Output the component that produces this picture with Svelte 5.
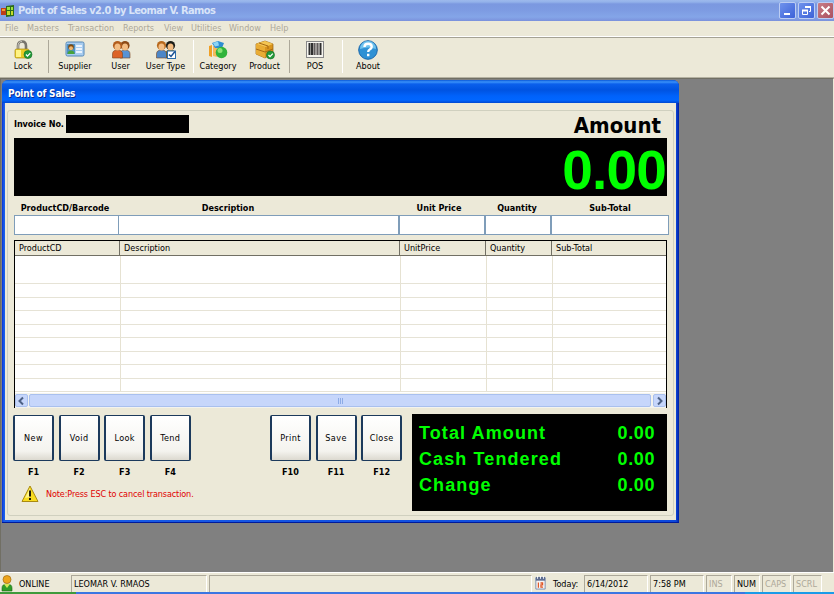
<script>
  const menus = [
    { label: "File", w: 22 },
    { label: "Masters", w: 41 },
    { label: "Transaction", w: 55 },
    { label: "Reports", w: 41 },
    { label: "View", w: 27 },
    { label: "Utilities", w: 38 },
    { label: "Window", w: 41 },
    { label: "Help", w: 27 },
  ];

  const tools = [
    { icon: "lock", label: "Lock", w: 46 },
    { icon: "supplier", label: "Supplier", w: 52, sep: "dark" },
    { icon: "user", label: "User", w: 39 },
    { icon: "usertype", label: "User Type", w: 51 },
    { icon: "category", label: "Category", w: 48, sep: "light" },
    { icon: "product", label: "Product", w: 45 },
    { icon: "pos", label: "POS", w: 50, sep: "dark" },
    { icon: "about", label: "About", w: 50, sep: "light" },
  ];

  const entries = ["ProductCD/Barcode", "Description", "Unit Price", "Quantity", "Sub-Total"];
  const columns = ["ProductCD", "Description", "UnitPrice", "Quantity", "Sub-Total"];
  const rows = Array.from({ length: 9 });

  const leftKeys = [
    { label: "New", key: "F1" },
    { label: "Void", key: "F2" },
    { label: "Look", key: "F3" },
    { label: "Tend", key: "F4" },
  ];
  const rightKeys = [
    { label: "Print", key: "F10" },
    { label: "Save", key: "F11" },
    { label: "Close", key: "F12" },
  ];

  const totals = [
    { label: "Total Amount", value: "0.00" },
    { label: "Cash Tendered", value: "0.00" },
    { label: "Change", value: "0.00" },
  ];
</script>

{#snippet check(x, y)}
  <circle cx={x} cy={y} r="4" fill="#239b3a" stroke="#136b24" stroke-width=".6" />
  <path d="M{x - 2} {y}l1.5 1.6 2.8 -3" fill="none" stroke="#fff" stroke-width="1.3" />
{/snippet}

{#snippet person(x, hair, shirt)}
  <path d="M{x - 5} 18v-4q0-4 5-4t5 4v4z" fill={shirt} stroke="#7b4520" stroke-width=".6" />
  <circle cx={x} cy="5.5" r="4.6" fill={hair} />
  <ellipse cx={x} cy="7" rx="3" ry="3.6" fill="#f3bd83" />
{/snippet}

<div class="app">
  <header class="titlebar">
    <svg class="logo" width="14" height="14" viewBox="0 0 14 14">
      <path d="M0 4h5v7H0z" fill="#bd3d17" />
      <path d="M1 5h3v2H1z" fill="#ec9d32" />
      <path d="M5 2l8-1v11l-8 1z" fill="#2c6b1c" />
      <path d="M6 3h3v3H6zM10 3h2v3h-2z" fill="#9be33c" />
      <path d="M6 7h3v4H6zM10 7h2v4h-2z" fill="#c5dc29" />
    </svg>
    <h1>Point of Sales v2.0 by Leomar V. Ramos</h1>
    <div class="winbtns">
      <button aria-label="Minimize"><svg width="16" height="16"><path d="M4 10h6v2H4z" fill="#fff" /></svg></button>
      <button aria-label="Restore">
        <svg width="16" height="16" fill="none" stroke="#fff"><path d="M6.5 5V3.5h5v5H10" /><path d="M6 4h6" stroke-width="2" /><path d="M3.5 7.5h5v4h-5z" /><path d="M3 7.5h6" stroke-width="2" /></svg>
      </button>
      <button class="x" aria-label="Close"><svg width="16" height="16"><path d="M3.500 3.500l8 8M11.500 3.500l-8 8" stroke="#fff" stroke-width="2" /></svg></button>
    </div>
  </header>

  <nav>
    {#each menus as m}
      <span style:width="{m.w}px">{m.label}</span>
    {/each}
  </nav>

  <div class="toolbar">
    {#each tools as t}
      {#if t.sep}<i class="sep {t.sep}"></i>{/if}
      <div class="tool" style:width="{t.w}px">
        <svg width="22" height="20" viewBox="0 0 22 20">
          {#if t.icon === "lock"}
            <path d="M6 10V6q0-4.500 4-4.500t4 4.500v4" fill="none" stroke="#77746c" stroke-width="2.600" />
            <path d="M6 10V6q0-4.500 4-4.500" fill="none" stroke="#c9c7bd" />
            <rect x="3" y="9" width="14" height="9" rx="1.500" fill="#e9cb23" stroke="#a98b18" stroke-width=".7" />
            <path d="M4 10h5v7H4z" fill="#fff384" />
            {@render check(16, 14.5)}
          {:else if t.icon === "supplier"}
            <rect x="2" y="2" width="18" height="14" rx="1.500" fill="#a9cdf0" stroke="#5588b8" />
            <rect x="3" y="4" width="8" height="10" fill="#4d91c4" />
            <circle cx="7" cy="7" r="2.800" fill="#7c4a12" />
            <circle cx="7" cy="8.200" r="2" fill="#f0b66d" />
            <path d="M3.500 14q0-3.500 3.500-3.500t3.500 3.500z" fill="#48a33b" />
            <path d="M12 6h6M12 9h6M12 12h6" stroke="#fff" stroke-width="1.600" />
          {:else if t.icon === "user"}
            {@render person(15, "#8c4a16", "#5792d5")}
            {@render person(7.5, "#b25d1d", "#dc6327")}
          {:else if t.icon === "usertype"}
            {@render person(15.5, "#1c1d18", "#50892f")}
            {@render person(6.5, "#b8691d", "#4c86c7")}
            <rect x="12.500" y="11" width="8" height="7.500" fill="#fff" stroke="#2b6ba9" />
            <path d="M14 14.500l2 2 4-5" fill="none" stroke="#174f93" stroke-width="1.500" />
          {:else if t.icon === "category"}
            <path d="M2 6l3-1v12l-3-1z" fill="#f0a025" />
            <path d="M6 6h4v11l-4-1z" fill="#f6b95c" />
            <path d="M5 3l6-2 6 2-2 5H8z" fill="#2f8ed2" />
            <path d="M6 3l5-1.500 1 4-4 1z" fill="#8dd5f5" />
            <circle cx="14.500" cy="12.500" r="5.800" fill="#31b33b" />
            <circle cx="13" cy="10.500" r="2.500" fill="#89e475" />
          {:else if t.icon === "product"}
            <path d="M2 4l9-3 8 3v9l-8 5-9-4z" fill="#d9941d" stroke="#9a6311" stroke-width=".7" />
            <path d="M2 4l9-3 8 3-8 3z" fill="#f4c552" />
            <path d="M11 7v11l-9-4V4z" fill="#e9ac34" />
            <path d="M5 3l9 3v3M2 9l9 3 8-3" fill="none" stroke="#a76914" />
            {@render check(16.5, 15)}
          {:else if t.icon === "pos"}
            <rect x="2.500" y="1.500" width="17" height="16" fill="#f6f5ef" stroke="#888" />
            <path d="M5.500 3v12M8 3v12M16.500 3v12" stroke="#303030" stroke-width="2" />
            <path d="M10.500 3v12M13.500 3v12" stroke="#605b5b" stroke-width="2.200" />
          {:else}
            <circle cx="11" cy="10" r="9.300" fill="#2f91d4" stroke="#1c69ad" />
            <path d="M3 9a8 8 0 0 1 16 0q-8-3-16 0z" fill="#70c3ee" />
            <path d="M7.500 7q0-3.200 3.600-3.200t3.600 2.900q0 1.800-2 2.800-1.500.8-1.500 2.500M11.200 13.700v2.500" fill="none" stroke="#fff" stroke-width="2.400" />
          {/if}
        </svg>
        <span>{t.label}</span>
      </div>
    {/each}
  </div>

  <main>
    <section class="window">
      <h2>Point of Sales</h2>
      <div class="client">
        <div class="group">
          <div class="top">
            <label for="invoice">Invoice No.</label>
            <output id="invoice" class="invoice"></output>
            <strong>Amount</strong>
          </div>
          <div class="display">0.00</div>

          <div class="cols entrylabels">
            {#each entries as e}<b>{e}</b>{/each}
          </div>
          <div class="cols entry">
            {#each entries as e}<input aria-label={e} />{/each}
          </div>

          <div class="grid">
            <div class="cols head">
              {#each columns as c}<span>{c}</span>{/each}
            </div>
            <div class="body">
              {#each rows as _}
                <div class="cols row">
                  {#each columns as _}<i></i>{/each}
                </div>
              {/each}
            </div>
            <div class="scroll">
              <button aria-label="Scroll left"><svg width="12" height="12"><path d="M7 2.500L3.500 6l3.500 3.500" /></svg></button>
              <div class="thumb"><i></i><i></i><i></i></div>
              <button aria-label="Scroll right"><svg width="12" height="12"><path d="M4 2.500L7.500 6 4 9.500" /></svg></button>
            </div>
          </div>

          <div class="bottom">
            <div class="actions">
              <div class="keys">
                {#each leftKeys as k}
                  <div class="key"><button>{k.label}</button><b>{k.key}</b></div>
                {/each}
                <span class="gap"></span>
                {#each rightKeys as k}
                  <div class="key"><button>{k.label}</button><b>{k.key}</b></div>
                {/each}
              </div>
              <p class="note">
                <svg width="18" height="18" viewBox="0 0 18 18">
                  <path d="M9 1L17 16.500H1z" fill="#f8dc20" stroke="#a98a10" stroke-linejoin="round" />
                  <path d="M9 3L4 13l5-1z" fill="#fff58b" />
                  <path d="M9 5.500v6M9 13v2" stroke="#221c08" stroke-width="2" />
                </svg>
                <span>Note:Press ESC to cancel transaction.</span>
              </p>
            </div>
            <div class="totals">
              {#each totals as t}
                <div><span>{t.label}</span><span class="num">{t.value}</span></div>
              {/each}
            </div>
          </div>
        </div>
      </div>
    </section>
  </main>

  <footer>
    <svg width="14" height="17" viewBox="0 0 14 17">
      <path d="M2 16v-3q0-4 5-4t5 4v3z" fill="#2e9d27" stroke="#1c6d18" stroke-width=".6" />
      <circle cx="7" cy="4.500" r="4" fill="#eda51c" stroke="#a36b0c" stroke-width=".7" />
      <path d="M4 9h6l-3 4z" fill="#d4e95b" />
    </svg>
    <span class="online">ONLINE</span>
    <span class="pane name">LEOMAR V. RMAOS</span>
    <span class="pane blank"></span>
    <svg class="cal" width="11" height="14" viewBox="0 0 13 15" preserveAspectRatio="none">
      <path d="M1 2h11v12H1z" fill="#f8f4f2" stroke="#7389ac" />
      <path d="M1 1h11v4H1z" fill="#5e6d91" />
      <path d="M3 0v3M6.500 0v3M10 0v3" stroke="#fff" />
      <path d="M4 7v5.500M6.500 7.500h2.500v2H7v2.500h2.500" fill="none" stroke="#df5525" stroke-width="1.400" />
    </svg>
    <span class="today">Today:</span>
    <span class="pane date">6/14/2012</span>
    <span class="pane time">7:58 PM</span>
    <span class="pane ins off">INS</span>
    <span class="pane numl">NUM</span>
    <span class="pane caps off">CAPS</span>
    <span class="pane scrl off">SCRL</span>
  </footer>
  <div class="taskbar"><i class="start"></i><i class="tray"></i></div>
</div>

<style>
  :global(body) {
    margin: 0;
    overflow: hidden;
  }
  .app {
    width: 834px;
    height: 594px;
    display: flex;
    flex-direction: column;
    background: #ece9d8;
    font: 9px "DejaVu Sans Condensed", "DejaVu Sans", sans-serif;
    color: #000;
    white-space: nowrap;
  }
  .app * {
    box-sizing: border-box;
  }
  button {
    padding: 0;
    font: inherit;
    color: inherit;
  }
  svg {
    display: block;
    flex: none;
  }

  .titlebar {
    height: 21px;
    flex: none;
    display: flex;
    align-items: center;
    padding-left: 1px;
    background: linear-gradient(#9db9ec 0, #93b2ea 2px, #7b98e0 4px, #7d9be2 10px, #84a5e8 17px, #7a91dc 21px);
  }
  h1 {
    flex: 1;
    margin: 0 0 0 3px;
    font-size: 11px;
    line-height: 20px;
    letter-spacing: -0.62px;
    color: #d9e4f8;
  }
  .winbtns {
    display: flex;
    gap: 2px;
  }
  .winbtns button {
    width: 17px;
    height: 17px;
    border: 1px solid #bccdf3;
    border-radius: 2px;
    background: linear-gradient(135deg, #6f92ec, #3c62d8);
  }
  .winbtns .x {
    background: linear-gradient(135deg, #c77d86, #ab5060);
  }

  nav {
    height: 16px;
    flex: none;
    display: flex;
    padding-left: 5px;
    line-height: 14px;
    color: #aca899;
    border-bottom: 1px solid #fff;
  }
  nav span {
    flex: none;
  }

  .toolbar {
    height: 41px;
    flex: none;
    display: flex;
    border-top: 1px solid #a5a294;
    border-bottom: 1px solid #b5b2a2;
    padding-top: 2px;
  }
  .tool {
    display: flex;
    flex-direction: column;
    align-items: center;
  }
  .tool span {
    line-height: 13px;
  }
  .sep {
    width: 1px;
    height: 33px;
    margin-left: 2px;
    background: #aca899;
  }
  .sep.light {
    background: #fff;
  }

  main {
    flex: 1;
    min-height: 0;
    background: #808080;
    border-top: 1px solid #716f64;
    border-left: 1px solid #716f64;
    border-right: 1px solid #ece9d8;
    padding: 1px 0 0 1px;
  }
  .window {
    width: 677px;
    height: 443px;
    display: flex;
    flex-direction: column;
    background: linear-gradient(90deg, #0831d9, #1a5ee8 2px, #0c48dc 674px, #001ea0);
    border-bottom: 1px solid #001a9a;
    border-radius: 6px 6px 0 0;
    padding: 0 3px 2px 3px;
  }
  h2 {
    height: 23px;
    flex: none;
    margin: 0 -3px;
    padding-left: 6px;
    font-size: 10px;
    line-height: 27px;
    letter-spacing: -0.2px;
    color: #fff;
    text-shadow: 1px 1px #0a2a90;
    border-radius: 6px 6px 0 0;
    background: linear-gradient(#0a58d8 0, #3a92fa 2px, #0b60ec 4px, #0053e1 10px, #0062fb 16px, #0066ff 20px, #0047d0 23px);
  }
  .client {
    flex: 1;
    background: #ece9d8;
    padding: 7px 2px 4px;
  }
  .group {
    height: 406px;
    border: 1px solid #d0d0bf;
    border-radius: 3px;
    padding: 4px 0 0 6px;
  }
  .top {
    display: flex;
    height: 23px;
    width: 653px;
  }
  .top label {
    width: 52px;
    font-weight: bold;
    line-height: 19px;
    letter-spacing: -0.1px;
  }
  .invoice {
    width: 123px;
    height: 18px;
    background: #000;
  }
  .top strong {
    margin-left: auto;
    margin-right: 6px;
    font-size: 22px;
    line-height: 22px;
  }
  .display {
    width: 653px;
    height: 58px;
    background: #000;
    color: #0f0;
    font: bold 55px/65px "Liberation Sans", sans-serif;
    letter-spacing: -0.8px;
    text-align: right;
    padding-right: 1px;
  }

  .cols {
    display: grid;
  }
  .entrylabels {
    grid-template-columns: 102px 280px 86px 70px 116px;
    width: 654px;
    height: 19px;
    line-height: 24px;
    text-align: center;
  }
  .entrylabels b:nth-child(2) {
    padding-right: 56px;
  }
  .entry {
    grid-template-columns: 105px 280px 86px 66px 118px;
    width: 655px;
    height: 20px;
  }
  .entry input {
    width: 100%;
    height: 20px;
    border: 1px solid #7f9db9;
    background: #fff;
    padding: 0;
  }
  .entry input:nth-child(2) {
    border-left: 0;
  }

  .grid {
    width: 653px;
    height: 168px;
    margin-top: 5px;
    border: 1px solid #000;
    border-bottom: 0;
    background: #fff;
  }
  .head {
    grid-template-columns: 104px 280px 86px 66px 115px;
    height: 15px;
    background: #ece9d8;
    border-bottom: 1px solid #716f64;
  }
  .head span {
    padding-left: 4px;
    line-height: 15px;
    border-left: 1px solid #716f64;
  }
  .head span:first-child {
    border-left: 0;
  }
  .body {
    height: 137px;
    overflow: hidden;
  }
  .row {
    grid-template-columns: 106px 280px 86px 66px 113px;
    height: 13.5px;
    border-bottom: 1px solid #e6e3d6;
  }
  .row:first-child {
    height: 28px;
  }
  .row i {
    border-right: 1px solid #e6e2d2;
  }
  .row i:last-child {
    border: 0;
  }
  .scroll {
    height: 15px;
    display: flex;
    background: #f3f3ee;
    padding-top: 1px;
  }
  .scroll button,
  .thumb {
    height: 13px;
    border: 1px solid #a9c0ee;
    border-radius: 2px;
    background: #c6d6fb;
  }
  .scroll button {
    width: 13px;
  }
  .scroll svg {
    fill: none;
    stroke: #4d6185;
    stroke-width: 2;
  }
  .thumb {
    width: 622px;
    margin: 0 2px 0 1px;
    display: flex;
    justify-content: center;
    align-items: center;
    gap: 1px;
  }
  .thumb i {
    width: 1px;
    height: 6px;
    background: #8cabe6;
  }

  .bottom {
    display: flex;
    justify-content: space-between;
    width: 653px;
    margin-top: 6px;
  }
  .keys {
    display: flex;
    gap: 4.6px;
    margin-left: -1px;
    padding-top: 1px;
  }
  .key {
    width: 41px;
    text-align: center;
  }
  .key button {
    display: block;
    width: 41px;
    height: 46px;
    border: 1px solid #1c3a5c;
    border-width: 1px 2px;
    border-radius: 2px;
    background: linear-gradient(#fff, #f4f3ee 80%, #dcd9cf);
    letter-spacing: 0.4px;
  }
  .key b {
    display: block;
    line-height: 23px;
  }
  .gap {
    width: 70px;
  }
  .note {
    display: flex;
    margin: 1px 0 0 7px;
    color: #e00000;
    line-height: 18px;
  }
  .note span {
    margin-left: 7px;
    letter-spacing: -0.12px;
  }
  .totals {
    width: 255px;
    height: 97px;
    padding: 6px 12px 0 7px;
    background: #000;
    color: #0f0;
    font: bold 18px/26px "Liberation Sans", sans-serif;
    letter-spacing: 1.1px;
  }
  .totals div {
    display: flex;
    justify-content: space-between;
  }
  .totals .num {
    letter-spacing: 0.6px;
  }

  footer {
    height: 20px;
    flex: none;
    display: flex;
    align-items: flex-end;
    border-top: 1px solid #fff;
    line-height: 16px;
  }
  .online {
    width: 57px;
    padding-left: 5px;
  }
  .pane {
    height: 17px;
    border: 1px solid #aca899;
    border-right-color: #fff;
    border-bottom: 0;
    padding-left: 2px;
    margin-right: 2px;
    flex: none;
  }
  .name {
    width: 136px;
  }
  .blank {
    width: 323px;
  }
  .cal {
    margin: 0 1px 2px 1px;
  }
  .today {
    width: 37px;
    padding-left: 6px;
  }
  .date {
    width: 64px;
  }
  .time {
    width: 54px;
  }
  .ins {
    width: 26px;
  }
  .numl {
    width: 26px;
  }
  .caps {
    width: 29px;
  }
  .scrl {
    width: 29px;
  }
  .off {
    color: #aca899;
  }
  .taskbar {
    height: 2px;
    flex: none;
    display: flex;
    justify-content: space-between;
    background: #3b76e2;
  }
  .start {
    width: 76px;
    background: #3f9a3c;
  }
  .tray {
    width: 89px;
    background: #1b9be8;
  }
</style>
